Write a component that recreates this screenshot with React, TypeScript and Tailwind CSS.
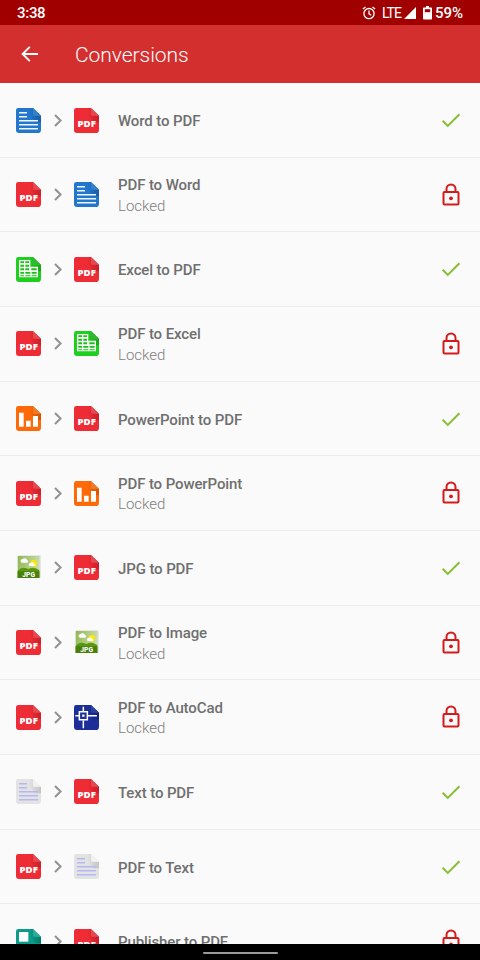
import React from 'react';

type FileKind = 'pdf' | 'word' | 'excel' | 'powerpoint' | 'jpg' | 'autocad' | 'text' | 'publisher';

interface Conversion {
  from: FileKind;
  to: FileKind;
  label: string;
  locked?: boolean;
  subtitle?: string;
}

const conversions: Conversion[] = [
  { from: 'word', to: 'pdf', label: 'Word to PDF' },
  { from: 'pdf', to: 'word', label: 'PDF to Word', locked: true, subtitle: 'Locked' },
  { from: 'excel', to: 'pdf', label: 'Excel to PDF' },
  { from: 'pdf', to: 'excel', label: 'PDF to Excel', locked: true, subtitle: 'Locked' },
  { from: 'powerpoint', to: 'pdf', label: 'PowerPoint to PDF' },
  { from: 'pdf', to: 'powerpoint', label: 'PDF to PowerPoint', locked: true, subtitle: 'Locked' },
  { from: 'jpg', to: 'pdf', label: 'JPG to PDF' },
  { from: 'pdf', to: 'jpg', label: 'PDF to Image', locked: true, subtitle: 'Locked' },
  { from: 'pdf', to: 'autocad', label: 'PDF to AutoCad', locked: true, subtitle: 'Locked' },
  { from: 'text', to: 'pdf', label: 'Text to PDF' },
  { from: 'pdf', to: 'text', label: 'PDF to Text' },
  { from: 'publisher', to: 'pdf', label: 'Publisher to PDF', locked: true },
];

const palette: Record<Exclude<FileKind, 'jpg'>, { base: string; shade: string; fold: string }> = {
  pdf: { base: '#ee2c35', shade: '#c9202b', fold: '#e5484f' },
  word: { base: '#2277cc', shade: '#1b5ca3', fold: '#3580c9' },
  excel: { base: '#1fcf1f', shade: '#18a51b', fold: '#35b535' },
  powerpoint: { base: '#ff6a08', shade: '#d65200', fold: '#f07a2c' },
  autocad: { base: '#1c2f98', shade: '#15237a', fold: '#2c3fa3' },
  text: { base: '#e3e3e3', shade: '#c4c4c4', fold: '#f1f1f1' },
  publisher: { base: '#0c9d8a', shade: '#087868', fold: '#2bac9b' },
};

const TextLines = ({ color }: { color: string }) => (
  <path d="M9 14h24M9 26h24M9 38h57M9 50h57M9 62h57" stroke={color} strokeWidth="4.500" />
);

const Glyph = ({ kind }: { kind: FileKind }) => {
  switch (kind) {
    case 'pdf':
      return (
        <text
          x="38"
          y="56"
          textAnchor="middle"
          textLength="55"
          lengthAdjust="spacingAndGlyphs"
          fill="#fff"
          fontFamily="'Open Sans', sans-serif"
          fontWeight="800"
          fontSize="25.500"
        >
          PDF
        </text>
      );
    case 'word':
      return <TextLines color="#f0f6fc" />;
    case 'text':
      return <TextLines color="#b7b7f2" />;
    case 'excel':
      return (
        <g>
          <path d="M9 9h34v20h23v32H9z" fill="#f4fff2" />
          <path
            d="M13 13h11v5H13zM28 13h11v5H28zM13 23h11v6H13zM28 23h11v6H28zM13 34h11v6H13zM28 34h11v6H28zM46 34h16v6H46zM13 45h11v5H13zM28 45h15v5H28zM47 45h15v5H47zM13 55h11v3H13zM28 55h15v3H28zM47 55h15v3H47z"
            fill="#1fbd20"
          />
        </g>
      );
    case 'powerpoint':
      return <path d="M9 20h14v42H9zM30 44h14v18H30zM51 30h15v32H51z" fill="#fff" />;
    case 'autocad':
      return (
        <g stroke="#fff" strokeWidth="4.500" fill="none">
          <path d="M28 5v13M28 46v24M4 32h11M41 32h28" />
          <path d="M16 20h24v24H16z" />
          <path d="M25 29h6v6h-6z" fill="#fff" strokeWidth="1" />
        </g>
      );
    case 'publisher':
      return (
        <g>
          <path d="M9 9h28v29H9z" fill="#fff" />
          <path d="M44 46h22v16H44z" fill="#d6f3ee" />
        </g>
      );
    default:
      return null;
  }
};

const JpgIcon = () => (
  <svg viewBox="0 0 75 75" className="h-[25px] w-[25px] shrink-0">
    <defs>
      <linearGradient id="jpg-sky" x1="0" y1="0" x2="1" y2="0.300">
        <stop offset="0" stopColor="#8fb653" />
        <stop offset="1" stopColor="#c9dda6" />
      </linearGradient>
    </defs>
    <path d="M6 1h68v68H6z" fill="#dedede" />
    <path d="M5 3h65v66H5z" fill="url(#jpg-sky)" />
    <path d="M5 48C14 37 24 36 37 42c14-6 22-4 33 4v23H5z" fill="#5d970f" />
    <path d="M5 49h65v20H5z" fill="#47800a" />
    <circle cx="53" cy="25" r="10" fill="#ffe70a" />
    <path
      d="M18 23a5 5 0 0 1 1-10 8 8 0 0 1 14 2 4.500 4.500 0 0 1 1 8zM42 33a4 4 0 0 1 1-8 7 7 0 0 1 12 2 3.500 3.500 0 0 1 1 6z"
      fill="#fff"
    />
    <text
      x="38"
      y="66"
      textAnchor="middle"
      textLength="38"
      lengthAdjust="spacingAndGlyphs"
      fill="#fff"
      fontFamily="Roboto, sans-serif"
      fontWeight="800"
      fontSize="24"
    >
      JPG
    </text>
  </svg>
);

const FileIcon = ({ kind }: { kind: FileKind }) => {
  if (kind === 'jpg') return <JpgIcon />;

  const { base, shade, fold } = palette[kind];
  const gradientId = `shade-${kind}`;

  return (
    <svg viewBox="0 0 75 75" className="h-[25px] w-[25px] shrink-0">
      <defs>
        <linearGradient id={gradientId} x1="1" y1="0.200" x2="0.300" y2="0.200">
          <stop offset="0" stopColor={shade} />
          <stop offset="1" stopColor={shade} stopOpacity="0" />
        </linearGradient>
      </defs>
      <path d="M7 0h44l24 23v42q0 10-10 10H9q-9 0-9-9V7q0-7 7-7z" fill={base} />
      <path d="M24 1h27v22h24v20H58z" fill={`url(#${gradientId})`} />
      <path d="M51 0l24 23H56q-5 0-5-5z" fill={fold} />
      <Glyph kind={kind} />
    </svg>
  );
};

const CheckIcon = () => (
  <svg viewBox="0 0 24 24" className="h-6 w-6" fill="none" stroke="#86bf35" strokeWidth="2">
    <path d="M3.600 12.700l5.200 5.200L20.400 6.300" />
  </svg>
);

const LockIcon = () => (
  <svg viewBox="0 0 24 24" className="h-6 w-6" fill="none" stroke="#d31b1b" strokeWidth="2">
    <rect x="4.500" y="9" width="15" height="12.500" rx="1" />
    <path d="M7.500 9V5.900a4.500 4.500 0 0 1 9 0V9" />
    <circle cx="12" cy="15.300" r="1.900" fill="#d31b1b" stroke="none" />
  </svg>
);

const StatusBar = () => (
  <div className="flex h-[25px] shrink-0 items-center bg-[#a00000] pr-[17px] pl-[17px] text-white">
    <span className="text-[15px] leading-5 font-medium tracking-[-0.300px]">3:38</span>
    <svg viewBox="0 0 14 14" className="ml-auto h-[14px] w-[14px]" fill="none" stroke="#fff" strokeWidth="1.300">
      <circle cx="7" cy="7.600" r="5.100" />
      <path d="M7 4.600v3.200l2.300 1.400M0.900 3.100L3.500 1M13.100 3.100L10.500 1" />
    </svg>
    <span className="ml-[6px] text-[14px] leading-5 tracking-[-1px]">LTE</span>
    <svg viewBox="0 0 12 12" className="ml-[3px] h-3 w-3">
      <path d="M12 0v12H0z" fill="#fff" />
    </svg>
    <svg viewBox="0 0 9 14" className="ml-[7px] h-[14px] w-[9px]">
      <path d="M3 0h3v1.500h2.200q.8 0 .8.800v10.400q0 .8-.8.800H.8q-.8 0-.8-.8V2.300q0-.8.800-.8H3z" fill="#fff" />
      <path d="M1.800 3.200h5.400v3H1.800z" fill="#a00000" />
    </svg>
    <span className="ml-[3px] text-[15px] leading-5 font-medium">59%</span>
  </div>
);

const ConversionRow = ({ item }: { item: Conversion }) => (
  <li className="flex h-[74.670px] shrink-0 items-center border-b border-[#ececec] pt-[0.400px] pr-[17px] pl-[16.300px]">
    <FileIcon kind={item.from} />
    <svg viewBox="0 0 8 13" className="mx-[12.500px] h-[13px] w-2" fill="none" stroke="#929292" strokeWidth="2.100">
      <path d="M1 0.900l5.600 5.600L1 12.100" />
    </svg>
    <FileIcon kind={item.to} />
    <div className="ml-[18.700px] flex flex-col pt-[2.300px]">
      <span className="text-[15px] leading-5 font-medium tracking-[-0.110px] text-[#6f6f6f]">{item.label}</span>
      {item.subtitle && (
        <span className="pt-[0.500px] text-[15px] leading-[21px] font-light text-[#808080]">{item.subtitle}</span>
      )}
    </div>
    <div className="ml-auto">{item.locked ? <LockIcon /> : <CheckIcon />}</div>
  </li>
);

export default function App() {
  return (
    <div className="flex h-[960px] w-[480px] flex-col overflow-hidden bg-[#fafafa] font-['Roboto',sans-serif]">
      <StatusBar />
      <header className="flex h-[58px] shrink-0 items-center bg-[#d32f2f] pl-[21px] text-white">
        <svg viewBox="0 0 18 16" className="h-4 w-[18px]" fill="none" stroke="#fff" strokeWidth="1.900">
          <path d="M17 8H1.800M8.800 0.800L1.600 8l7.200 7.200" />
        </svg>
        <h1 className="ml-[36px] pt-[2px] text-[21px] leading-6 font-light tracking-[-0.050px]">Conversions</h1>
      </header>
      <ul className="flex min-h-0 flex-1 flex-col overflow-hidden">
        {conversions.map((item) => (
          <ConversionRow key={item.label} item={item} />
        ))}
      </ul>
      <nav className="flex h-4 shrink-0 items-center justify-center bg-black pt-[2px]">
        <div className="h-[2px] w-[75px] rounded-full bg-[#9a9a9a]" />
      </nav>
    </div>
  );
}
